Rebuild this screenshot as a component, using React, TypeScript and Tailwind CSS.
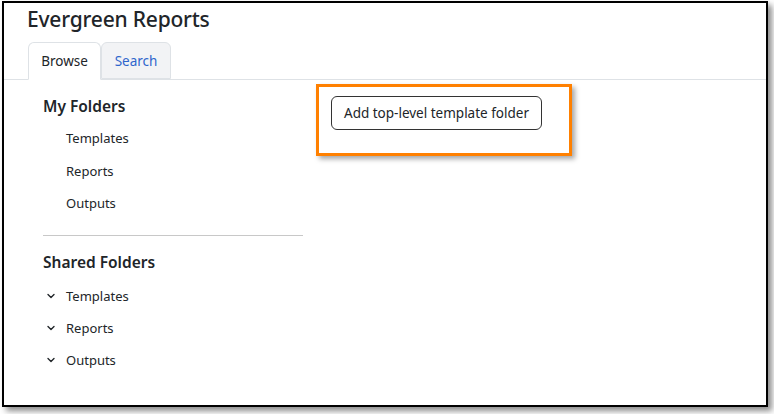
import { ChevronDown } from "lucide-react";

const myFolders = ["Templates", "Reports", "Outputs"];

export default function App() {
  return (
    <div className="w-[774px] h-[414px] bg-white overflow-hidden font-['Noto_Sans',sans-serif] text-[#212529]">
      <div className="ml-[2px] mt-[1px] w-[766px] h-[406px] border-2 border-black bg-white shadow-[4px_4px_6px_rgba(0,0,0,0.45)] flex flex-col">
        <h1 className="pl-[23px] pt-[2px] h-[39px] text-[21px] font-medium leading-[28px] tracking-[-0.2px]">
          Evergreen Reports
        </h1>

        <div className="flex pl-[24px] border-b border-[#dee2e6] h-[38px]">
          <div className="w-[73px] -mb-px pt-px border border-[#dee2e6] border-b-white rounded-t-md bg-white flex items-center justify-center text-[13.5px]">
            Browse
          </div>
          <div className="w-[70px] pt-px border border-[#dee2e6] rounded-t-md bg-[#f2f3f5] flex items-center justify-center text-[13.5px] text-[#2f66cc]">
            Search
          </div>
        </div>

        <div className="flex">
          <div className="ml-[39px] w-[260px] flex flex-col">
            <h2 className="mt-[15px] text-[15.5px] font-semibold leading-[22px]">My Folders</h2>
            <ul className="mt-[11px] flex flex-col gap-[12.5px] text-[13px] leading-[20px] pl-[23px]">
              {myFolders.map((f) => (
                <li key={f}>{f}</li>
              ))}
            </ul>
            <div className="mt-[22px] border-t border-[#c8c8c8]" />
            <h2 className="mt-[15px] text-[15.5px] font-semibold leading-[22px]">Shared Folders</h2>
            <ul className="mt-[13px] flex flex-col gap-[12px] text-[13px] leading-[20px]">
              {myFolders.map((f) => (
                <li key={f} className="flex items-center">
                  <ChevronDown size={12} strokeWidth={2.75} className="ml-[2px] mr-[9px]" />
                  {f}
                </li>
              ))}
            </ul>
          </div>

          <div className="ml-[13px] mt-[4px] w-[256px] h-[72px] border-[3px] border-[#ff8000] shadow-[3px_3px_5px_rgba(0,0,0,0.35)] pl-[12px] pt-[9px]">
            <button className="h-[34px] px-[12px] border border-[#333] rounded-md text-[13.5px] leading-[20px] bg-white">
              Add top-level template folder
            </button>
          </div>
        </div>
      </div>
    </div>
  );
}
